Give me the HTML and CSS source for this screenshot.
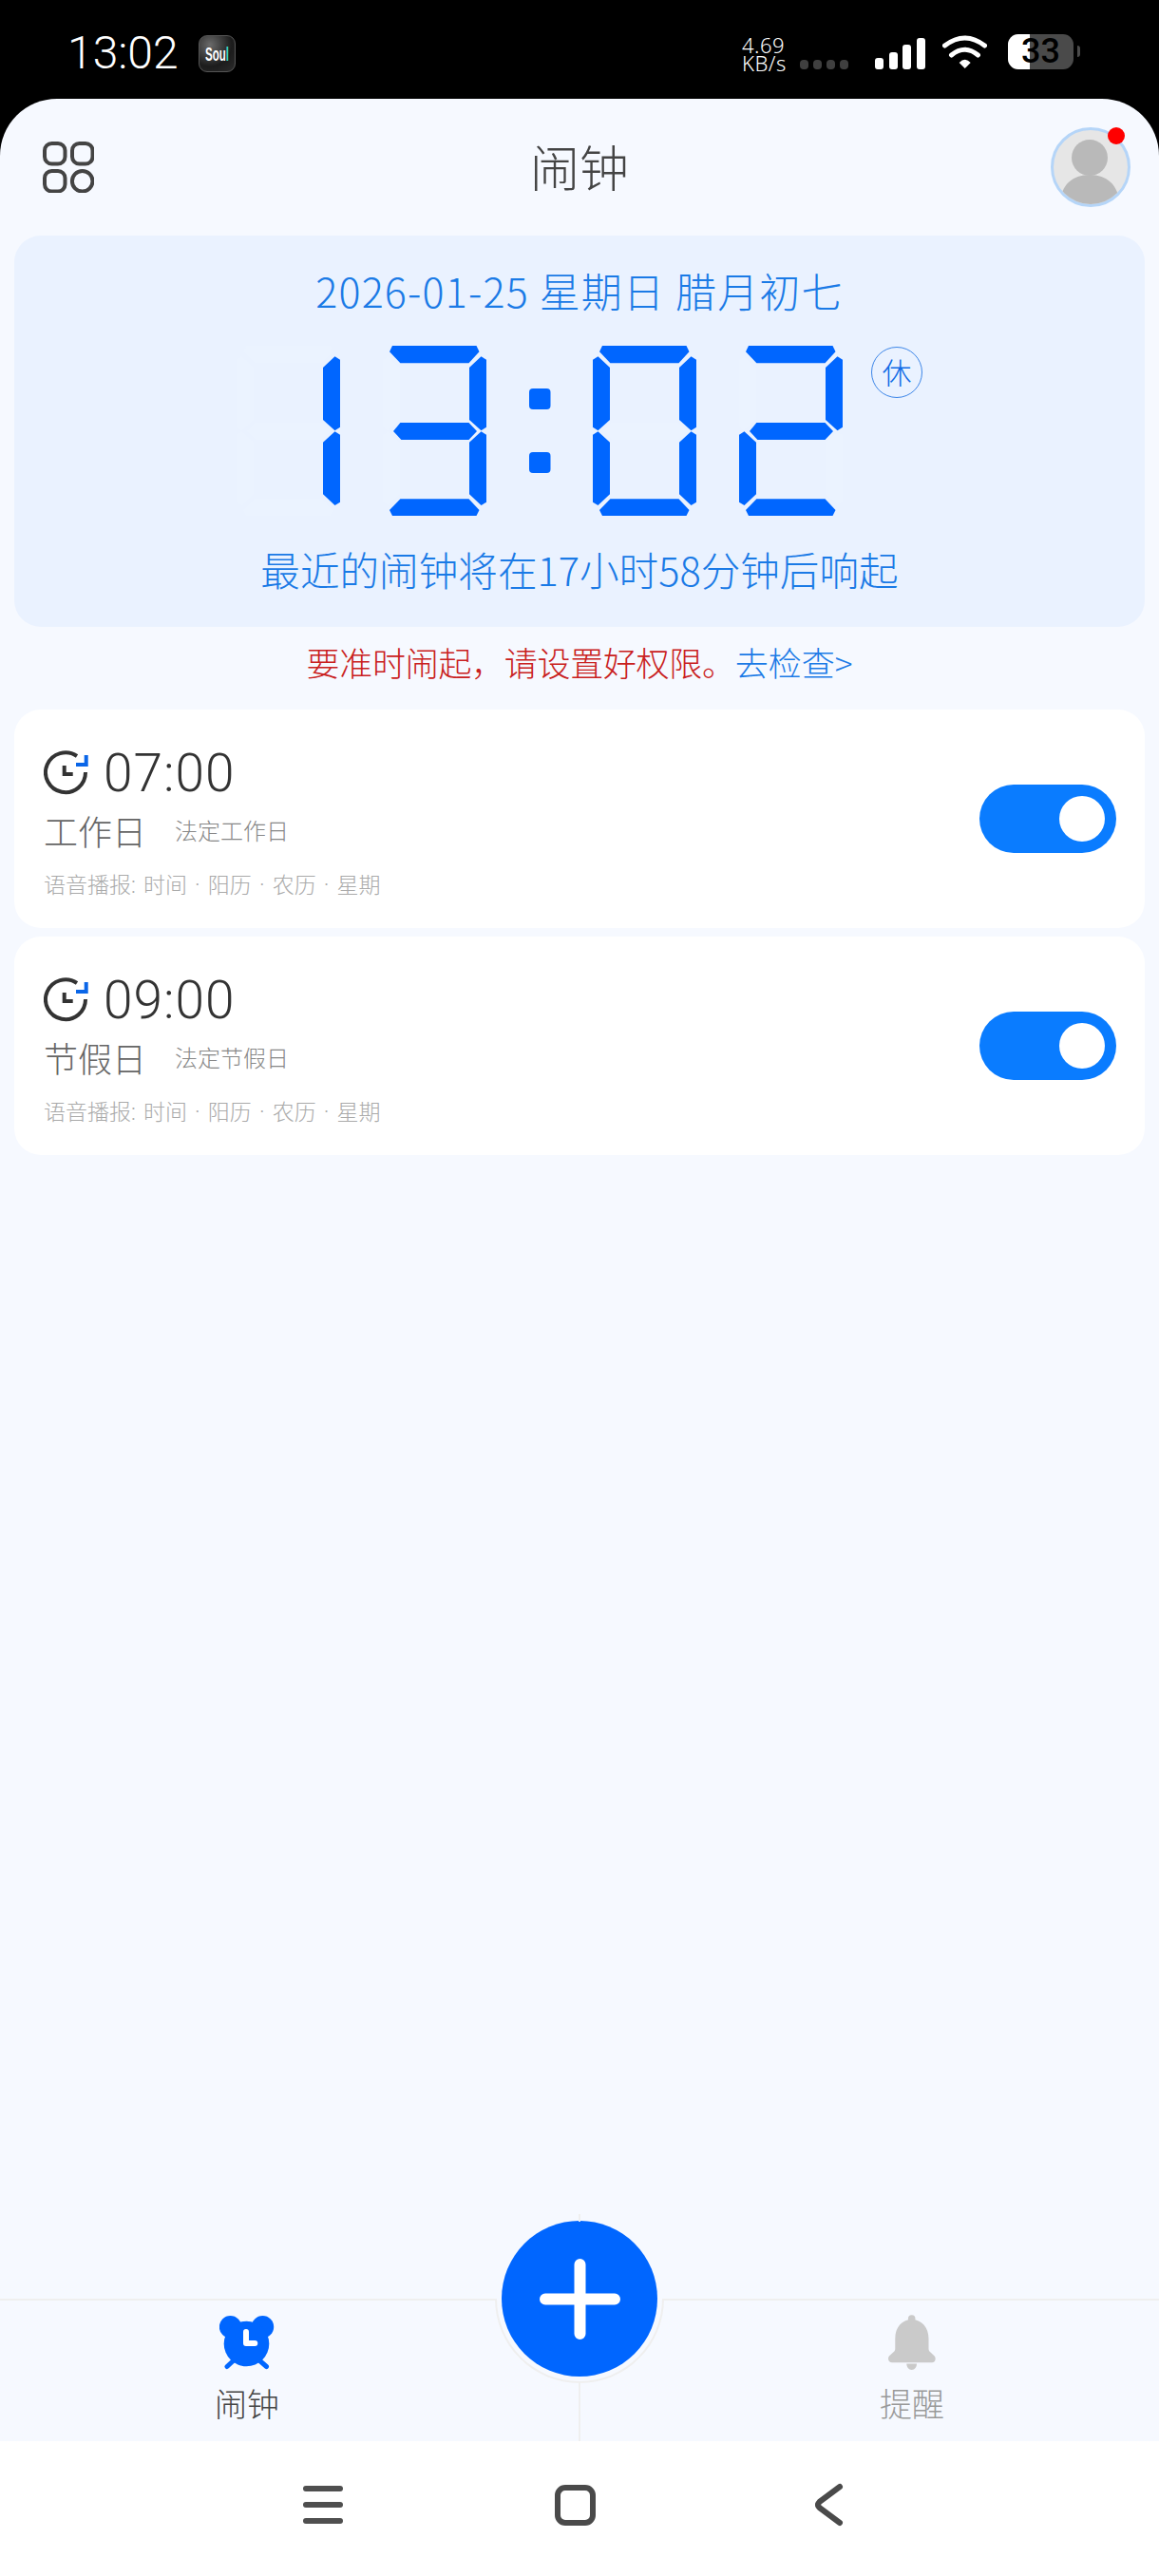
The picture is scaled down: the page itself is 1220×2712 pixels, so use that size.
FILE: index.html
```html
<!DOCTYPE html>
<html lang="zh-CN">
<head>
<meta charset="UTF-8">
<meta name="viewport" content="width=device-width, initial-scale=1.0">
<title>闹钟</title>
<link rel="stylesheet" href="styles.css">
</head>
<body>

  <!-- Status bar -->
  <div class="status-bar">
    <div class="status-left">
      <span class="status-time">13:02</span>
      <span class="soul-icon"><span class="soul-text">Sou<i>l</i></span></span>
    </div>
    <div class="status-right">
      <div class="net-speed"><span>4.69</span><span>KB/s</span></div>
      <div class="net-dots"><i></i><i></i><i></i><i></i></div>
      <div class="signal"><i class="bar-1"></i><i class="bar-2"></i><i class="bar-3"></i><i class="bar-4"></i></div>
      <svg class="wifi" width="47" height="35" viewBox="0 0 47 35">
        <path d="M2.5 11 Q23.5 -5 44.5 11" fill="none" stroke="#fff" stroke-width="5" stroke-linecap="round"/>
        <path d="M9.5 21 Q23.5 9.5 37.5 21" fill="none" stroke="#fff" stroke-width="5" stroke-linecap="round"/>
        <path d="M17.7 29 Q23.7 22.5 29.7 29 L23.7 35 Z" fill="#fff"/>
      </svg>
      <div class="battery"><span class="battery-level"></span><span class="battery-text">33</span></div>
      <span class="battery-nub"></span>
    </div>
  </div>

  <div class="page">

    <div class="header">
      <svg class="grid-icon" width="54" height="54" viewBox="0 0 54 54">
        <rect x="2" y="2" width="21.5" height="21.5" rx="7.5"/>
        <rect x="31" y="2" width="21.5" height="21.5" rx="7.5"/>
        <rect x="2" y="31" width="21.5" height="21.5" rx="7.5"/>
        <circle cx="41.7" cy="41.7" r="10.8"/>
      </svg>
      <div class="title">闹钟</div>
      <div class="avatar">
        <svg width="78" height="78" viewBox="0 0 78 78">
          <circle cx="38" cy="29" r="19"/>
          <path d="M7 78 C7 58 20 47 38 47 C56 47 69 58 69 78 Z"/>
        </svg>
        <span class="avatar-dot"></span>
      </div>
    </div>

    <div class="hero">
      <div class="hero-date">2026-01-25 星期日 腊月初七</div>
      <div class="hero-clock">
        <svg class="led" width="640" height="180" viewBox="0 0 640 180">
          <defs>
            <polygon id="seg-a" points="10,0 98.5,0 101.5,6.3 90.5,18.3 18.4,18.3 7,6.3"/>
            <polygon id="seg-b" points="91,23 103.5,11.3 109,14.7 109,85.7 103.5,89.3 91,78"/>
            <polygon id="seg-c" points="91,101.7 103.5,90.3 109,93.7 109,164.7 103.5,168 91,156.3"/>
            <polygon id="seg-d" points="18.4,161.3 90.5,161.3 101.5,173 98.5,179 10,179 7,173"/>
            <polygon id="seg-e" points="0,93.7 5.5,90.3 18,101.7 18,156.3 5.5,168 0,164.7"/>
            <polygon id="seg-f" points="0,14.7 5.5,11.3 18,23 18,78 5.5,89.3 0,85.7"/>
            <polygon id="seg-g" points="18.4,81 90.5,81 99,90 90.5,99 19.4,99 11,90"/>
            <g id="digit-8">
              <use href="#seg-a"/><use href="#seg-b"/><use href="#seg-c"/><use href="#seg-d"/>
              <use href="#seg-e"/><use href="#seg-f"/><use href="#seg-g"/>
            </g>
            <g id="digit-0">
              <use href="#seg-a"/><use href="#seg-b"/><use href="#seg-c"/><use href="#seg-d"/>
              <use href="#seg-e"/><use href="#seg-f"/>
            </g>
            <g id="digit-1"><use href="#seg-b"/><use href="#seg-c"/></g>
            <g id="digit-2">
              <use href="#seg-a"/><use href="#seg-b"/><use href="#seg-g"/><use href="#seg-e"/><use href="#seg-d"/>
            </g>
            <g id="digit-3">
              <use href="#seg-a"/><use href="#seg-b"/><use href="#seg-g"/><use href="#seg-c"/><use href="#seg-d"/>
            </g>
          </defs>
          <!-- unlit segments behind the lit ones -->
          <g class="led-off">
            <use href="#digit-8" x="0"/>
            <use href="#digit-8" x="154"/>
            <use href="#digit-8" x="375"/>
            <use href="#digit-8" x="529"/>
          </g>
          <g class="led-on">
            <use href="#digit-1" x="0"/>
            <use href="#digit-3" x="154"/>
            <rect x="308" y="45" width="22.5" height="22" rx="4"/>
            <rect x="308" y="112" width="22.5" height="22" rx="4"/>
            <use href="#digit-0" x="375"/>
            <use href="#digit-2" x="529"/>
          </g>
        </svg>
        <span class="rest-badge">休</span>
      </div>
      <div class="hero-next">最近的闹钟将在17小时58分钟后响起</div>
    </div>

    <div class="notice"><span class="notice-warn">要准时闹起，请设置好权限。</span><span class="notice-link">去检查&gt;</span></div>

    <div class="alarm-list">
      <div class="alarm-card">
        <div class="alarm-info">
          <div class="alarm-time">
            <svg width="47" height="47" viewBox="0 0 47 47">
              <path class="clock-line" d="M35 6 A21 21 0 1 0 44 23"/>
              <path class="clock-line" d="M21.7 16 V25 H30.7"/>
              <path class="clock-arrow" d="M34 15 H44.7 V5"/>
            </svg>
            <span>07:00</span>
          </div>
          <div class="alarm-name"><span>工作日</span><small>法定工作日</small></div>
          <div class="alarm-voice">语音播报: 时间 · 阳历 · 农历 · 星期</div>
        </div>
        <div class="switch"><span></span></div>
      </div>

      <div class="alarm-card">
        <div class="alarm-info">
          <div class="alarm-time">
            <svg width="47" height="47" viewBox="0 0 47 47">
              <path class="clock-line" d="M35 6 A21 21 0 1 0 44 23"/>
              <path class="clock-line" d="M21.7 16 V25 H30.7"/>
              <path class="clock-arrow" d="M34 15 H44.7 V5"/>
            </svg>
            <span>09:00</span>
          </div>
          <div class="alarm-name"><span>节假日</span><small>法定节假日</small></div>
          <div class="alarm-voice">语音播报: 时间 · 阳历 · 农历 · 星期</div>
        </div>
        <div class="switch"><span></span></div>
      </div>
    </div>

    <div class="tabbar">
      <div class="tab tab-active">
        <svg width="58" height="58" viewBox="0 0 58 58">
          <circle cx="11.5" cy="12.7" r="11.7"/>
          <circle cx="45.5" cy="12.7" r="11.7"/>
          <circle cx="28.5" cy="30.5" r="23.8"/>
          <path d="M8 54.5 L15 48 M49.5 54.5 L42 48" fill="none" stroke="#0066ff" stroke-width="5" stroke-linecap="round"/>
          <path d="M28 18 V30 H37.3" fill="none" stroke="#fff" stroke-width="6" stroke-linecap="round" stroke-linejoin="round"/>
        </svg>
        <span>闹钟</span>
      </div>
      <div class="tab-divider"></div>
      <div class="tab">
        <svg width="50" height="58" viewBox="0 0 50 58">
          <circle cx="24.7" cy="4" r="3.8"/>
          <path d="M24.7 5 C35 5 42.5 13 42.5 25 V36 C42.5 40 49.7 42 49.7 46 C49.7 49 48 50.3 46 50.3 H4 C2 50.3 0 49 0 46 C0 42 7.3 40 7.3 36 V25 C7.3 13 14.5 5 24.7 5 Z"/>
          <path d="M19.3 51.5 H30 C30 55 28 58 24.7 58 C21.4 58 19.3 55 19.3 51.5 Z"/>
        </svg>
        <span>提醒</span>
      </div>
      <div class="fab">
        <div class="fab-button">
          <svg width="85" height="85" viewBox="0 0 85 85">
            <path d="M6 42.5 H79 M42.5 6 V79" fill="none" stroke="#fff" stroke-width="12" stroke-linecap="round"/>
          </svg>
        </div>
      </div>
    </div>
  </div>

  <!-- System navigation -->
  <div class="nav-bar">
    <div class="nav-menu"><i></i><i></i><i></i></div>
    <div class="nav-home"></div>
    <svg class="nav-back" width="30" height="46" viewBox="0 0 30 46">
      <path d="M26 4 L4.5 20 Q1.5 23 4.5 26 L26 42" fill="none" stroke="#4a4a4a" stroke-width="6" stroke-linecap="round" stroke-linejoin="round"/>
    </svg>
  </div>

</body>
</html>
```

FILE: styles.css
```css
* {
  box-sizing: border-box;
  margin: 0;
  padding: 0;
}

body {
  width: 1220px;
  height: 2712px;
  display: flex;
  flex-direction: column;
  background-color: #000;
  font-family: "Noto Sans CJK SC", "Noto Sans", sans-serif;
  font-weight: 300;
  overflow: hidden;
}

/* Status bar */

.status-bar {
  height: 104px;
  flex-shrink: 0;
  display: flex;
  justify-content: space-between;
  padding: 36px 83px 0 71px;
  color: #fff;
}

.status-left {
  display: flex;
  align-items: flex-start;
  gap: 21px;
}

.status-time {
  font-family: Roboto, sans-serif;
  font-weight: 300;
  font-size: 48px;
  line-height: 40px;
}

.soul-icon {
  width: 39px;
  height: 39px;
  margin-top: 1px;
  border: 1px solid #555;
  border-radius: 9px;
  background: radial-gradient(circle at 30% 25%, #6a6a6a, #1c1c1c 60%, #2c2c2c);
  text-align: center;
}

.soul-text {
  display: block;
  font-family: "Liberation Sans", sans-serif;
  font-weight: 700;
  font-size: 16px;
  line-height: 37px;
  color: #fff;
  transform: scale(0.72, 1.3);
}

.soul-text i {
  font-style: normal;
  color: #3ad6c6;
}

.status-right {
  display: flex;
  align-items: flex-start;
  position: relative;
}

.net-speed {
  display: flex;
  flex-direction: column;
  width: 61px;
  margin-top: 2px;
  font-family: "Noto Sans", sans-serif;
  font-weight: 300;
  font-size: 22px;
  line-height: 19px;
  letter-spacing: 0.5px;
}

.net-dots {
  display: flex;
  gap: 5px;
  margin-top: 27px;
  width: 79px;
}

.net-dots i {
  width: 9px;
  height: 10px;
  border-radius: 4px;
  background-color: #3f3f3f;
}

.signal {
  display: flex;
  align-items: flex-end;
  gap: 5.5px;
  height: 33px;
  margin-top: 4px;
  width: 71px;
}

.signal i {
  width: 9px;
  border-radius: 3px;
  background-color: #fff;
}

.bar-1 { height: 12px; }
.bar-2 { height: 18px; }
.bar-3 { height: 26px; }
.bar-4 { height: 33px; }

.wifi {
  margin-right: 22px;
  margin-top: 1px;
}

.battery {
  position: relative;
  width: 69px;
  height: 37px;
  border-radius: 11px;
  background-color: #4a4a4a;
}

.battery-level {
  display: block;
  width: 23px;
  height: 100%;
  border-radius: 11px 0 0 11px;
  background-color: #fff;
}

.battery-text {
  position: absolute;
  left: 0;
  right: 0;
  top: 0;
  text-align: center;
  font-family: Roboto, sans-serif;
  font-weight: 500;
  font-size: 36px;
  line-height: 37px;
  color: #000;
}

.battery-nub {
  width: 3px;
  height: 12px;
  margin: 12px 0 0 4px;
  border-radius: 0 3px 3px 0;
  background-color: #4a4a4a;
}

/* App page */

.page {
  flex: 1;
  display: flex;
  flex-direction: column;
  position: relative;
  background-color: #f6f9ff;
  border-radius: 60px 60px 0 0;
}

.header {
  height: 144px;
  flex-shrink: 0;
  display: grid;
  grid-template-columns: 1fr auto 1fr;
  align-items: center;
  padding: 0 30px;
}

.grid-icon {
  margin-left: 15px;
  margin-bottom: 1px;
}

.grid-icon rect,
.grid-icon circle {
  fill: none;
  stroke: #444;
  stroke-width: 4;
}

.title {
  margin-bottom: 3px;
  font-size: 52px;
  line-height: 60px;
  color: #444;
}

.avatar {
  position: relative;
  justify-self: end;
  width: 84px;
  height: 84px;
  border: 3px solid #b5d5f8;
  border-radius: 50%;
  background-color: #e6e6e6;
}

.avatar svg {
  display: block;
  border-radius: 50%;
  fill: #b9b9b9;
}

.avatar-dot {
  position: absolute;
  top: -3px;
  right: 3px;
  width: 18px;
  height: 18px;
  border-radius: 50%;
  background-color: #f00;
}

/* Clock panel */

.hero {
  height: 412px;
  flex-shrink: 0;
  margin: 0 15px;
  padding-top: 29px;
  border-radius: 28px;
  background-color: #eaf2ff;
  color: #1a7ae6;
  text-align: center;
}

.hero-date {
  font-size: 43px;
  line-height: 56px;
  letter-spacing: 1.2px;
}

.hero-clock {
  display: flex;
  justify-content: center;
  align-items: flex-start;
  gap: 28px;
  margin-top: 31px;
}

.led {
  display: block;
}

.led-off {
  fill: #ebf3ff;
}

.led-on {
  fill: #0066ff;
}

.rest-badge {
  width: 54px;
  height: 54px;
  margin-top: 1px;
  border: 1.5px solid #3d86e8;
  border-radius: 50%;
  font-size: 31px;
  line-height: 50px;
  color: #0f6ae6;
}

.hero-next {
  margin-top: 27px;
  font-size: 41.6px;
  line-height: 56px;
}

.notice {
  height: 87px;
  flex-shrink: 0;
  padding-top: 13px;
  text-align: center;
  font-size: 35px;
  line-height: 48px;
}

.notice-warn {
  letter-spacing: -0.3px;
  color: #c92020;
}

.notice-link {
  color: #1a7ae6;
}

/* Alarm cards */

.alarm-list {
  display: flex;
  flex-direction: column;
  gap: 9px;
  margin: 0 15px;
}

.alarm-card {
  height: 230px;
  display: flex;
  justify-content: space-between;
  align-items: center;
  padding: 0 30px 0 31px;
  border-radius: 28px;
  background-color: #fff;
}

.alarm-info {
  align-self: flex-start;
  padding-top: 43px;
}

.alarm-time {
  display: flex;
  align-items: center;
  gap: 16px;
  height: 47px;
  font-family: Roboto, sans-serif;
  font-weight: 300;
  font-size: 55px;
  letter-spacing: 1px;
  color: #333;
}

.clock-line {
  fill: none;
  stroke: #333;
  stroke-width: 4;
}

.clock-arrow {
  fill: none;
  stroke: #0a66e8;
  stroke-width: 4;
}

.alarm-name {
  display: flex;
  align-items: center;
  gap: 30px;
  margin-top: 15px;
  font-size: 36px;
  line-height: 44px;
  color: #666;
}

.alarm-name small {
  font-size: 24px;
  color: #888;
}

.alarm-voice {
  margin-top: 21px;
  font-family: Roboto, "Noto Sans CJK SC", sans-serif;
  font-size: 23px;
  line-height: 32px;
  word-spacing: 2.5px;
  color: #aaa;
}

.switch {
  width: 144px;
  height: 72px;
  display: flex;
  justify-content: flex-end;
  align-items: center;
  padding-right: 12px;
  border-radius: 36px;
  background-color: #0a7cff;
}

.switch span {
  width: 48px;
  height: 48px;
  border-radius: 50%;
  background-color: #fff;
}

/* Bottom tabs */

.tabbar {
  margin-top: auto;
  height: 150px;
  position: relative;
  display: grid;
  grid-template-columns: 520px 180px 520px;
  border-top: 2px solid #efefef;
}

.tab {
  display: flex;
  flex-direction: column;
  align-items: center;
  padding-top: 15px;
  font-size: 34px;
  line-height: 44px;
  color: #999;
  fill: #cacaca;
}

.tab:last-of-type {
  grid-column: 3;
}

.tab-active {
  color: #444;
  fill: #0066ff;
}

.tab span {
  margin-top: 13px;
}

.tab-divider {
  width: 2px;
  justify-self: center;
  background-color: #efefef;
}

/* Round add button; the ring around it only shows on its lower half */

.fab {
  position: absolute;
  left: 521px;
  top: -91px;
  width: 178px;
  height: 178px;
  display: flex;
  justify-content: center;
  align-items: center;
  border-radius: 50%;
  background-color: #f6f9ff;
}

.fab::before {
  content: "";
  position: absolute;
  inset: 0;
  border: 2px solid transparent;
  border-bottom-color: #efefef;
  border-left-color: #efefef;
  border-radius: 50%;
  transform: rotate(-45deg);
}

.fab::after {
  content: "";
  position: absolute;
  left: 88px;
  top: 0;
  width: 2px;
  height: 8px;
  background-color: #efefef;
}

.fab-button {
  position: relative;
  width: 164px;
  height: 164px;
  display: flex;
  justify-content: center;
  align-items: center;
  border-radius: 50%;
  background-color: #0066ff;
}

/* System navigation */

.nav-bar {
  height: 142px;
  flex-shrink: 0;
  display: flex;
  align-items: center;
  padding: 0 0 8px 319px;
  background-color: #fff;
}

.nav-menu {
  display: flex;
  flex-direction: column;
  gap: 11px;
  width: 42px;
}

.nav-menu i {
  height: 6px;
  border-radius: 3px;
  background-color: #4f4f4f;
}

.nav-home {
  width: 43px;
  height: 43px;
  margin-left: 223px;
  border: 6px solid #4a4a4a;
  border-radius: 11px;
}

.nav-back {
  margin-left: 231px;
}
```
